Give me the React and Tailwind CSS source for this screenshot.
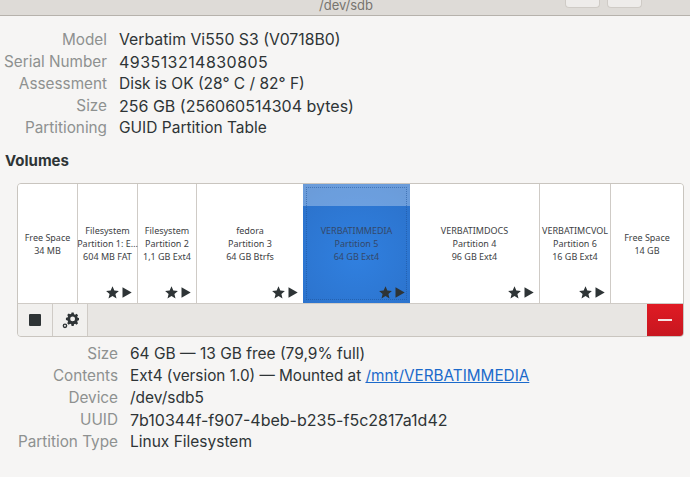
import React from "react";

const diskRows = [
    ["Model", "Verbatim Vi550 S3 (V0718B0)", "text-[15.8px]"],
    ["Serial Number", "493513214830805", "text-[16px] tracking-[0.45px]"],
    ["Assessment", "Disk is OK (28° C / 82° F)", "text-[15.5px]"],
    ["Size", "256 GB (256060514304 bytes)", "text-[16px]"],
    ["Partitioning", "GUID Partition Table", "text-[15.5px]"],
];

const partitions = [
    { w: "w-[60px]", lines: ["Free Space", "34 MB"] },
    { w: "w-[60px]", lines: ["Filesystem", "Partition 1: E…", "604 MB FAT"], icons: true },
    { w: "w-[59px]", lines: ["Filesystem", "Partition 2", "1,1 GB Ext4"], icons: true },
    { w: "w-[106px]", lines: ["fedora", "Partition 3", "64 GB Btrfs"], icons: true, noBorder: true },
    { w: "w-[107px]", lines: ["VERBATIMMEDIA", "Partition 5", "64 GB Ext4"], icons: true, selected: true, noBorder: true },
    { w: "w-[130px]", lines: ["VERBATIMDOCS", "Partition 4", "96 GB Ext4"], icons: true },
    { w: "w-[71px]", lines: ["VERBATIMCVOL", "Partition 6", "16 GB Ext4"], icons: true },
    { w: "flex-1", lines: ["Free Space", "14 GB"], noBorder: true },
];

function StateIcons() {
    return (
        <div className="absolute right-[5px] bottom-[4px] flex items-center gap-[3px]">
            <svg width="13" height="13" viewBox="0 0 12 12" className="fill-[#2e3436]">
                <path d="M6 0.2 L7.7 4.1 L11.9 4.5 L8.7 7.3 L9.7 11.5 L6 9.3 L2.3 11.5 L3.3 7.3 L0.1 4.5 L4.3 4.1 Z" />
            </svg>
            <svg width="10" height="11" viewBox="0 0 10 11" className="fill-[#2e3436]">
                <path d="M0.5 0.3 L9.7 5.5 L0.5 10.7 Z" />
            </svg>
        </div>
    );
}

function Partition({ p }) {
    return (
        <div
            className={`${p.w} relative flex shrink-0 flex-col items-center justify-center font-['Noto_Sans',sans-serif] text-[9px] leading-[13px] whitespace-nowrap ${
                p.selected
                    ? "bg-[radial-gradient(circle_at_50%_60%,#3080e0,#2b70c8)] text-[#34486a]"
                    : "bg-white text-[#3d4144]"
            } ${p.noBorder ? "" : "border-r border-[#cfcbc6]"}`}
        >
            {p.selected && (
                <>
                    <div className="absolute inset-x-0 top-0 h-[22px] bg-white/30" />
                    <div className="absolute inset-[3px] border border-dotted border-[#1c4f92]/50" />
                </>
            )}
            {p.lines.map((line) => (
                <span key={line} className="relative">
                    {line}
                </span>
            ))}
            {p.icons && <StateIcons />}
        </div>
    );
}

function Row({ label, value, labelW, size }) {
    return (
        <div className="flex h-[22px] items-center">
            <div className={`${labelW} shrink-0 text-right whitespace-nowrap text-[#8e9190]`}>{label}</div>
            <div className={`${size} ml-3 whitespace-nowrap text-[#2e3436]`}>{value}</div>
        </div>
    );
}

export default function App() {
    return (
        <div className="h-[477px] w-[690px] overflow-hidden bg-[#f6f5f4] font-['Inter',sans-serif] text-[15.3px]">
            <div className="relative flex h-[16px] items-end justify-center overflow-hidden border-b border-[#b6b2ac] bg-[#dedbd7]">
                <span className="pl-[2px] text-[13px] leading-[19px] text-[#77746f]">/dev/sdb</span>
                <div className="absolute top-0 left-[565px] h-[8px] w-[35px] rounded-b-[4px] border border-t-0 border-[#cfcbc6] bg-[#eeecea]" />
                <div className="absolute top-0 left-[607px] h-[8px] w-[35px] rounded-b-[4px] border border-t-0 border-[#cfcbc6] bg-[#eeecea]" />
            </div>

            <div className="pt-[13px]">
                {diskRows.map(([label, value, size]) => (
                    <Row key={label} label={label} value={value} size={size} labelW="w-[107px]" />
                ))}
            </div>

            <div className="mt-[12px] px-[5px] text-[15px] leading-[20px] font-bold text-[#2e3436]">Volumes</div>

            <div className="mx-[17px] mt-[12px] h-[154px] w-[667px] overflow-hidden rounded-[4px] border border-[#c9c5bf] bg-[#e8e6e3]">
                <div className="flex h-[120px] border-b border-[#cfcbc6]">
                    {partitions.map((p, i) => (
                        <Partition key={i} p={p} />
                    ))}
                </div>
                <div className="flex h-[32px] justify-between">
                    <div className="flex">
                        <button className="flex w-[35px] items-center justify-center border-r border-[#cfcbc6] bg-[#f1f0ee]">
                            <span className="h-[12px] w-[12px] rounded-[1px] bg-[#2e3436]" />
                        </button>
                        <button className="flex w-[35px] items-center justify-center border-r border-[#cfcbc6] bg-[#f1f0ee]">
                            <svg width="17" height="17" viewBox="0 0 16 16" className="fill-[#2e3436]">
                                <path
                                    fillRule="evenodd"
                                    d="M9 0.5h2l.3 1.5 1.1.5 1.3-.8 1.4 1.4-.8 1.3.5 1.1 1.5.3v2l-1.5.3-.5 1.1.8 1.3-1.4 1.4-1.3-.8-1.1.5-.3 1.5H9l-.3-1.5-1.1-.5-1.3.8-1.4-1.4.8-1.3-.5-1.1L3.7 7.5v-2l1.5-.3.5-1.1-.8-1.3 1.4-1.4 1.3.8 1.1-.5zM10 4.2a2.3 2.3 0 1 0 0 4.6 2.3 2.3 0 0 0 0-4.6z"
                                />
                                <path
                                    fillRule="evenodd"
                                    d="M2.8 10.8a2.2 2.2 0 1 0 0 4.4 2.2 2.2 0 0 0 0-4.4zm0 1.3a.9.9 0 1 1 0 1.8.9.9 0 0 1 0-1.8z"
                                />
                            </svg>
                        </button>
                    </div>
                    <button className="flex w-[36px] items-center justify-center bg-[linear-gradient(#e01b24,#c7161f)]">
                        <span className="h-[2px] w-[14px] bg-[#f6e3e3]" />
                    </button>
                </div>
            </div>

            <div className="mt-[6px]">
                <Row label="Size" value="64 GB — 13 GB free (79,9% full)" size="text-[15.5px]" labelW="w-[118px]" />
                <Row
                    label="Contents"
                    value={
                        <>
                            Ext4 (version 1.0) — Mounted at{" "}
                            <a className="text-[#1b6acb] underline">/mnt/VERBATIMMEDIA</a>
                        </>
                    }
                    size="text-[15.3px]"
                    labelW="w-[118px]"
                />
                <Row label="Device" value="/dev/sdb5" size="text-[15.5px]" labelW="w-[118px]" />
                <Row label="UUID" value="7b10344f-f907-4beb-b235-f5c2817a1d42" size="text-[16px]" labelW="w-[118px]" />
                <Row label="Partition Type" value="Linux Filesystem" size="text-[15.5px]" labelW="w-[118px]" />
            </div>
        </div>
    );
}
